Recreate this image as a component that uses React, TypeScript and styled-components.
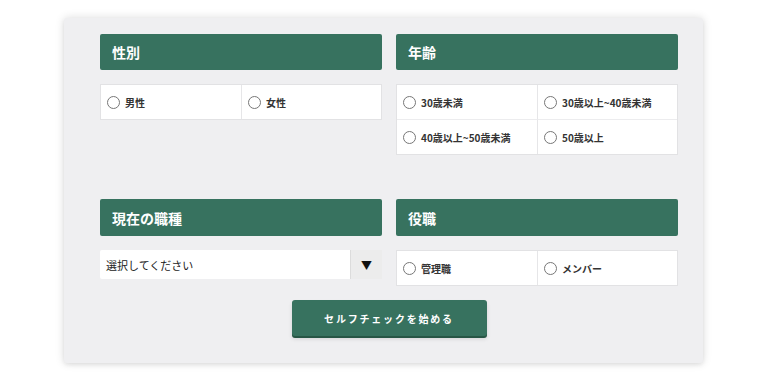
import React from "react";
import styled, { createGlobalStyle } from "styled-components";

const Global = createGlobalStyle`
  html, body { margin: 0; padding: 0; background: #ffffff; }
  body { font-family: "Noto Sans CJK JP", "Noto Sans", sans-serif; color: #333; }
`;

const Page = styled.div`
  width: 768px;
  height: 390px;
  display: flex;
  justify-content: flex-start;
  align-items: flex-start;
  padding: 18px 0 0 64px;
  box-sizing: border-box;
`;

const Card = styled.div`
  width: 639px;
  height: 345px;
  box-sizing: border-box;
  background: #efeff1;
  border-radius: 3px;
  box-shadow: 0 0 10px rgba(0, 0, 0, 0.14), 0 2px 4px rgba(0, 0, 0, 0.06);
  padding: 16px 25px 0 36px;
  display: flex;
  flex-direction: column;
`;

const Grid = styled.div`
  display: grid;
  grid-template-columns: 282px 282px;
  column-gap: 14px;
  row-gap: 44px;
  align-items: start;
`;

const Section = styled.div`
  display: flex;
  flex-direction: column;
  gap: 14px;
`;

const Header = styled.div<{ $h?: number }>`
  height: ${(p) => p.$h ?? 36}px;
  background: #37725f;
  border-radius: 2px;
  color: #fff;
  font-weight: 700;
  font-size: 14px;
  display: flex;
  align-items: center;
  padding-left: 12px;
`;

const Options = styled.div`
  display: grid;
  grid-template-columns: 1fr 1fr;
  background: #fff;
  border: 1px solid #e2e2e4;
`;

const Option = styled.label<{ $h?: number }>`
  height: ${(p) => p.$h ?? 34}px;
  display: flex;
  align-items: center;
  gap: 5px;
  padding-left: 6px;
  font-size: 10px;
  font-weight: 700;
  color: #333;
  border-top: 1px solid #ececee;
  &:nth-child(-n + 2) { border-top: none; }
  &:nth-child(even) { border-left: 1px solid #e6e6e8; }
`;

const Radio = styled.span`
  width: 11px;
  height: 11px;
  border: 1px solid #777;
  border-radius: 50%;
  box-sizing: content-box;
  background: #fff;
  flex: none;
`;

const Select = styled.div`
  height: 29px;
  display: flex;
  background: #fff;
  border-radius: 2px;
  font-size: 11px;
  color: #222;
`;

const SelectText = styled.div`
  flex: 1;
  display: flex;
  align-items: center;
  padding-left: 6px;
`;

const Arrow = styled.div`
  width: 31px;
  display: flex;
  align-items: center;
  justify-content: center;
  background: #ececec;
  border-left: 1px solid #dcdcdc;
  font-size: 11px;
  color: #111;
`;

const ButtonRow = styled.div`
  display: flex;
  justify-content: center;
  margin-top: 14px;
`;

const Button = styled.button`
  width: 195px;
  height: 36px;
  background: #37725f;
  border: none;
  border-radius: 3px;
  box-shadow: 0 2px 0 #275645, 0 3px 4px rgba(0, 0, 0, 0.12);
  color: #fff;
  font-family: "Noto Sans CJK JP", "Noto Sans", sans-serif;
  font-weight: 700;
  font-size: 10px;
  letter-spacing: 1.8px;
  cursor: pointer;
`;

const Choice = ({ label, h }: { label: string; h?: number }) => (
  <Option $h={h}>
    <Radio />
    {label}
  </Option>
);

export default function App() {
  return (
    <>
      <Global />
      <Page>
        <Card>
          <Grid>
            <Section>
              <Header>性別</Header>
              <Options>
                <Choice label="男性" />
                <Choice label="女性" />
              </Options>
            </Section>
            <Section>
              <Header>年齢</Header>
              <Options>
                <Choice label="30歳未満" />
                <Choice label="30歳以上~40歳未満" />
                <Choice label="40歳以上~50歳未満" />
                <Choice label="50歳以上" />
              </Options>
            </Section>
            <Section>
              <Header $h={37}>現在の職種</Header>
              <Select>
                <SelectText>選択してください</SelectText>
                <Arrow>▼</Arrow>
              </Select>
            </Section>
            <Section>
              <Header $h={37}>役職</Header>
              <Options>
                <Choice label="管理職" />
                <Choice label="メンバー" />
              </Options>
            </Section>
          </Grid>
          <ButtonRow>
            <Button>セルフチェックを始める</Button>
          </ButtonRow>
        </Card>
      </Page>
    </>
  );
}
